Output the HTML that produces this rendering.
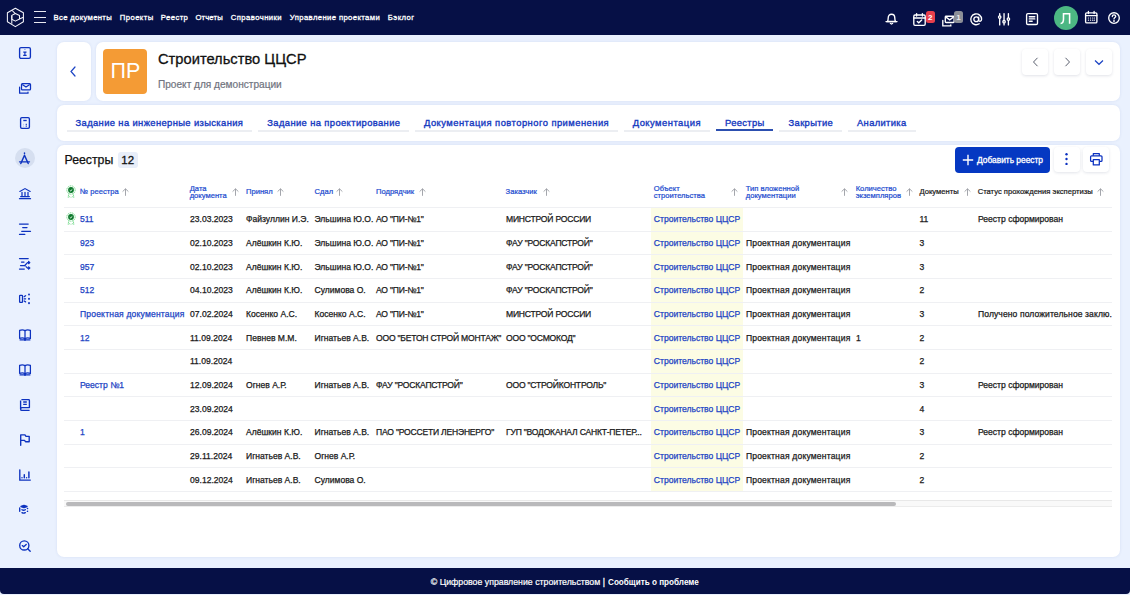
<!DOCTYPE html><html><head><meta charset="utf-8"><style>
*{margin:0;padding:0;box-sizing:border-box}
html,body{width:1130px;height:595px;overflow:hidden;background:#eaf1fe;font-family:"Liberation Sans",sans-serif}
.t{position:absolute;white-space:nowrap;line-height:1.15}
.a{position:absolute}
.card{position:absolute;background:#fff;border-radius:7px;box-shadow:0 0 3px rgba(40,70,150,.10)}
svg{position:absolute;overflow:visible}
</style></head><body><div class="a" style="left:0;top:0;width:1130px;height:34.6px;background:#061046"></div>
<svg style="left:0px;top:0px" width="30" height="34" viewBox="0 0 30 34" fill="none" stroke="#f4f4fa" stroke-width="1.05" stroke-linejoin="round">
<path d="M15.35 8.3 L23.4 12.75 L23.4 21.8 L15.35 26.6 L7.4 21.8 L7.4 12.75 Z"/>
<path d="M15.35 13.5 L19.5 15.5 L19.5 19.0 L15.35 21.1 L11.8 19.3 L11.8 15.4 Z"/>
<path d="M11.8 15.4 V23.8 M12.2 10.5 L15.0 13.4 M19.5 18.9 L23.4 17.2"/>
</svg>
<div class="a" style="left:34px;top:11px;width:12.4px;height:1.1px;background:#e8e8f0"></div>
<div class="a" style="left:34px;top:16.7px;width:12.4px;height:1.1px;background:#e8e8f0"></div>
<div class="a" style="left:34px;top:22.3px;width:12.4px;height:1.1px;background:#e8e8f0"></div>
<div class="t" style="left:53.6px;top:13.63px;font-size:7.7px;font-weight:400;color:#fff;-webkit-text-stroke:0.3px #fff;letter-spacing:0.323px">Все документы</div>
<div class="t" style="left:119.8px;top:13.63px;font-size:7.7px;font-weight:400;color:#fff;-webkit-text-stroke:0.3px #fff;letter-spacing:0.420px">Проекты</div>
<div class="t" style="left:160.8px;top:13.63px;font-size:7.7px;font-weight:400;color:#fff;-webkit-text-stroke:0.3px #fff;letter-spacing:0.420px">Реестр</div>
<div class="t" style="left:195.4px;top:13.63px;font-size:7.7px;font-weight:400;color:#fff;-webkit-text-stroke:0.3px #fff;letter-spacing:0.153px">Отчеты</div>
<div class="t" style="left:230.8px;top:13.63px;font-size:7.7px;font-weight:400;color:#fff;-webkit-text-stroke:0.3px #fff;letter-spacing:0.429px">Справочники</div>
<div class="t" style="left:289.8px;top:13.63px;font-size:7.7px;font-weight:400;color:#fff;-webkit-text-stroke:0.3px #fff;letter-spacing:0.384px">Управление проектами</div>
<div class="t" style="left:387.8px;top:13.63px;font-size:7.7px;font-weight:400;color:#fff;-webkit-text-stroke:0.3px #fff;letter-spacing:0.437px">Бэклог</div>
<svg style="left:885px;top:12px" width="13" height="13" viewBox="0 0 13 13" fill="none" stroke="#fff" stroke-width="1.35" stroke-linecap="round">
<path d="M2.5 9.5 C3 8.5 3.2 7.5 3.2 6 C3.2 3.7 4.6 2.2 6.5 2.2 C8.4 2.2 9.8 3.7 9.8 6 C9.8 7.5 10 8.5 10.5 9.5 Z"/><path d="M1 9.6 H12"/><path d="M5.4 11.4 Q6.5 12.6 7.6 11.4"/></svg>
<svg style="left:913px;top:13px" width="13" height="13" viewBox="0 0 13 13" fill="none" stroke="#fff" stroke-width="1.35" stroke-linecap="round">
<rect x="0.8" y="2" width="11.4" height="10.3" rx="1.2"/><path d="M0.8 5 H12.2 M3.6 0.6 V3 M9.4 0.6 V3"/><path d="M4.3 8.4 L5.8 9.8 L8.7 7"/></svg>
<div class="a" style="left:926px;top:11px;width:9px;height:11.5px;border-radius:2.5px;background:#e8404d"></div>
<div class="t" style="left:927.9px;top:13.06px;font-size:8px;font-weight:700;color:#fff;">2</div>
<svg style="left:942px;top:15px" width="13" height="12" viewBox="0 0 13 12" fill="none" stroke="#fff" stroke-width="1.35" stroke-linecap="round">
<rect x="3.3" y="1.2" width="8.8" height="6.3" rx="0.8"/><path d="M4.3 2.4 L7.7 4.8 L11.1 2.4"/><path d="M0.8 5.5 V10.8 H8.8 V9.8"/></svg>
<div class="a" style="left:954px;top:11px;width:9px;height:11.5px;border-radius:2.5px;background:#8c8f98"></div>
<div class="t" style="left:956.3px;top:13.06px;font-size:8px;font-weight:700;color:#e8e8ea;">1</div>
<svg style="left:970px;top:13px" width="12.5" height="12.5" viewBox="0 0 12.5 12.5" fill="none" stroke="#fff" stroke-width="1.35" stroke-linecap="round">
<circle cx="6.25" cy="6.25" r="2.4"/><path d="M8.65 4.2 V7.2 C8.65 8.6 11.6 8.8 11.6 6.25 A5.4 5.4 0 1 0 9.2 10.8"/></svg>
<svg style="left:997.5px;top:13px" width="12.5" height="12.5" viewBox="0 0 12.5 12.5" fill="none" stroke="#fff" stroke-width="1.35" stroke-linecap="round">
<path d="M1.7 0.6 V2.9 M1.7 5.3 V11.9 M6.05 0.6 V7.5 M6.05 9.9 V11.9 M10.4 0.6 V4.9 M10.4 7.3 V11.9"/><circle cx="1.7" cy="4.1" r="1.2" fill="#061046"/><circle cx="6.05" cy="8.7" r="1.2" fill="#061046"/><circle cx="10.4" cy="6.1" r="1.2" fill="#061046"/></svg>
<svg style="left:1026px;top:13px" width="12.5" height="12.5" viewBox="0 0 12.5 12.5" fill="none" stroke="#fff" stroke-width="1.35" stroke-linecap="round">
<rect x="0.6" y="0.6" width="10.9" height="10.9" rx="1.3"/><path d="M3.3 3.7 H8.8 M3.3 5.9 H8.8 M3.3 8.2 H6.2"/></svg>
<div class="a" style="left:1054.2px;top:6.2px;width:24px;height:24px;border-radius:50%;background:#4cb783"></div>
<svg style="left:1060px;top:11px" width="12" height="14" viewBox="0 0 12 14" fill="none" stroke="#fff" stroke-width="1.55"><path d="M0.6 12.4 C2.6 12.4 3.5 11.2 3.5 8 V2.8 H9.6 V12.7"/></svg>
<svg style="left:1085px;top:11px" width="12.5" height="12.5" viewBox="0 0 12.5 12.5" fill="none" stroke="#fff" stroke-width="1.35" stroke-linecap="round">
<rect x="0.6" y="1.8" width="11.3" height="10.1" rx="1.2"/><path d="M0.6 4.6 H11.9 M3.4 0.5 V2.6 M9.1 0.5 V2.6"/><path d="M3.4 7 H3.5 M5.5 7 H5.6 M7.6 7 H7.7 M9.3 7 H9.4 M3.4 9.2 H3.5 M5.5 9.2 H5.6 M7.6 9.2 H7.7 M9.3 9.2 H9.4" stroke-width="1.2"/></svg>
<svg style="left:1107.5px;top:11.5px" width="12" height="12" viewBox="0 0 12 12" fill="none" stroke="#fff" stroke-width="1.35" stroke-linecap="round">
<circle cx="6" cy="6" r="5.3"/><path d="M4.3 4.6 C4.3 3.5 5.1 2.9 6 2.9 C7 2.9 7.7 3.5 7.7 4.4 C7.7 5.5 6 5.6 6 6.9"/><circle cx="6" cy="8.9" r="0.3" fill="#fff"/></svg>
<svg style="left:19px;top:47px" width="12" height="12" viewBox="0 0 12 12" fill="none" stroke="#0d32bf" stroke-width="1.35"><rect x="0.6" y="0.6" width="10.8" height="10.8" rx="1.4"/><path d="M5.9 2.2 V2.8 M4.3 5.1 H7.5 M5.9 5.1 V8.3 M4.2 8.4 H7.6" stroke-width="1.15"/></svg>
<svg style="left:19px;top:82.5px" width="12" height="11" viewBox="0 0 12 11" fill="none" stroke="#0d32bf" stroke-width="1.25" stroke-linejoin="round" stroke-linecap="round"><rect x="2.5" y="0.7" width="9" height="6.1" rx="0.9"/><path d="M3.6 1.8 L7 4 L10.4 1.8"/><path d="M0.6 4.2 V10.2 H9 V9.2"/></svg>
<svg style="left:20px;top:117px" width="10" height="12" viewBox="0 0 10 12" fill="none" stroke="#0d32bf" stroke-width="1.35"><rect x="0.6" y="0.6" width="8.8" height="10.8" rx="1.3"/><path d="M3.3 3.5 H6.7"/><path d="M3.2 7.3 H3.4 M3.2 9.2 H3.4 M5.7 7.3 H6.8 M5.7 9.2 H6.8" stroke-width="1.25"/></svg>
<div class="a" style="left:14.9px;top:147.7px;width:20.6px;height:20.6px;border-radius:50%;background:#d6dff0"></div>
<svg style="left:19px;top:152px" width="11" height="13" viewBox="0 0 11 13" fill="none" stroke="#0d32bf" stroke-width="1.45" stroke-linecap="round"><path d="M5.5 1 V1.4"/><path d="M5.5 3.2 L1.8 11.5 M5.5 3.2 L9.2 11.5"/><path d="M0.5 9.8 H10.5" stroke-width="1.25"/></svg>
<svg style="left:19px;top:187.5px" width="12" height="12" viewBox="0 0 12 12" fill="none" stroke="#0d32bf" stroke-width="1.1" stroke-linecap="round"><path d="M0.8 3.5 L6 0.6 L11.2 3.5"/><path d="M3 4.3 V7.8 M6 4.3 V7.8 M9 4.3 V7.8" stroke-width="1.25"/><path d="M1.6 8.6 H10.4"/><path d="M0.5 10.7 H11.5" stroke-width="1.3"/></svg>
<svg style="left:19px;top:222.5px" width="12" height="12" viewBox="0 0 12 12" fill="none" stroke="#0d32bf" stroke-width="1.25" stroke-linecap="round"><path d="M0.5 1.1 H9.2 M3.7 4.6 H8 M2.7 8.3 H11.5 M0.5 11.4 H5.8"/></svg>
<svg style="left:19px;top:257px" width="12" height="13" viewBox="0 0 12 13" fill="none" stroke="#0d32bf" stroke-width="1.25" stroke-linecap="round" stroke-linejoin="round"><path d="M0.5 1.5 H9.2 M2.5 5 H5 M1.5 8.5 H5.8 M0.5 12 H5.3"/><path d="M5.8 8.5 L8.5 5.6 H10.8 M9.6 4.5 L10.8 5.6 L9.6 6.7 M7 9.6 L8.5 11 H10.8 M9.6 9.9 L10.8 11 L9.6 12.1"/></svg>
<svg style="left:19px;top:293px" width="12" height="11" viewBox="0 0 12 11" fill="none" stroke="#0d32bf" stroke-width="1.25" stroke-linecap="round"><rect x="0.6" y="2.3" width="2.9" height="7" rx="0.6"/><path d="M5.2 3.6 L6.6 2.7 M5.2 5.8 H6.6 M5.2 8 L6.6 8.9"/><path d="M10 1.3 V1.6 M10 5.6 V5.9 M10 9.9 V10.2" stroke-width="1.85"/></svg>
<svg style="left:19px;top:328.8px" width="12" height="12" viewBox="0 0 12 12" fill="none" stroke="#0d32bf" stroke-width="1.25" stroke-linejoin="round"><path d="M0.6 1.4 C2.5 0.7 4.5 0.8 6 1.6 C7.5 0.8 9.5 0.7 11.4 1.4 V9.4 C9.5 8.7 7.5 8.8 6 9.6 C4.5 8.8 2.5 8.7 0.6 9.4 Z"/><path d="M6 1.6 V10.5 M0.6 10.8 H5 L6 11.4 L7 10.8 H11.4"/></svg>
<svg style="left:19px;top:364px" width="12" height="12" viewBox="0 0 12 12" fill="none" stroke="#0d32bf" stroke-width="1.25" stroke-linejoin="round"><path d="M0.6 1.4 C2.5 0.7 4.5 0.8 6 1.6 C7.5 0.8 9.5 0.7 11.4 1.4 V9.4 C9.5 8.7 7.5 8.8 6 9.6 C4.5 8.8 2.5 8.7 0.6 9.4 Z"/><path d="M6 1.6 V10.5 M0.6 10.8 H5 L6 11.4 L7 10.8 H11.4"/></svg>
<svg style="left:20px;top:399px" width="10" height="12" viewBox="0 0 10 12" fill="none" stroke="#0d32bf" stroke-width="1.35" stroke-linejoin="round"><path d="M1.4 0.6 H8.6 C9 0.6 9.4 1 9.4 1.4 V8.6 H1.6 C1 8.6 0.6 9.2 0.6 9.9 C0.6 10.7 1 11.4 1.8 11.4 H9.6"/><path d="M0.6 1.4 V10 M3.2 3 H6.8 M3.2 5.4 H6.8" /></svg>
<svg style="left:20px;top:434px" width="10" height="12" viewBox="0 0 10 12" fill="none" stroke="#0d32bf" stroke-width="1.35" stroke-linecap="round" stroke-linejoin="round"><path d="M0.7 11.3 V0.8 H5 L6 2.3 H9.2 V7.7 H5.5 L4.5 6.3 H0.7"/></svg>
<svg style="left:19px;top:469px" width="12" height="12" viewBox="0 0 12 12" fill="none" stroke="#0d32bf" stroke-width="1.35" stroke-linecap="round"><path d="M0.8 0.8 V11.1 H11.3"/><path d="M3 8.6 V8.8 M5.3 5.8 V8.8 M7.6 8.6 V8.8 M9.9 3 V8.8" stroke-width="1.45"/></svg>
<svg style="left:19px;top:504px" width="11" height="11" viewBox="0 0 11 11" fill="none" stroke="#0d32bf" stroke-width="1.35" stroke-linecap="round" stroke-linejoin="round"><path d="M2 2.5 L5 1.5 L8 2.5 L5 3.5 Z" fill="#0d32bf"/><path d="M0.7 4 V7.2 M3 5.7 Q4.6 6.8 6.3 5.7 M3 8.6 Q4.6 9.7 6.3 8.6 M8.4 4.6 L8.6 4.4 M8.4 7.4 L8.6 7.2"/></svg>
<svg style="left:19px;top:539.5px" width="12" height="12" viewBox="0 0 12 12" fill="none" stroke="#0d32bf" stroke-width="1.35" stroke-linecap="round" stroke-linejoin="round"><circle cx="5.3" cy="5.4" r="4.6"/><path d="M8.7 8.8 L11.2 11.3"/><path d="M3.3 5.6 L4.7 6.8 L7.2 4.5"/></svg>
<div class="card" style="left:57px;top:42px;width:33.5px;height:58.8px"></div>
<svg style="left:69px;top:66px" width="8" height="11" viewBox="0 0 8 11" fill="none" stroke="#1c44c4" stroke-width="1.2" stroke-linecap="round"><path d="M6 1 L2 5.5 L6 10"/></svg>
<div class="card" style="left:96px;top:42px;width:1023.8px;height:58.8px"></div>
<div class="a" style="left:103px;top:49px;width:44px;height:44.5px;border-radius:4px;background:#f49b35"></div>
<div class="t" style="left:110.5px;top:58.84px;font-size:21.5px;font-weight:400;color:#fff;">ПР</div>
<div class="t" style="left:158px;top:50.60px;font-size:14.7px;font-weight:400;color:#111;-webkit-text-stroke:0.3px #111">Строительство ЦЦСР</div>
<div class="t" style="left:158px;top:78.96px;font-size:10.1px;font-weight:400;color:#70737e;-webkit-text-stroke:0.2px #70737e">Проект для демонстрации</div>
<div class="a" style="left:1022.2px;top:49.4px;width:26px;height:25.2px;border-radius:4px;background:#fff;box-shadow:0 1px 3px rgba(20,30,80,.13)"></div>
<div class="a" style="left:1054px;top:49.4px;width:26px;height:25.2px;border-radius:4px;background:#fff;box-shadow:0 1px 3px rgba(20,30,80,.13)"></div>
<div class="a" style="left:1086.1px;top:49.4px;width:26px;height:25.2px;border-radius:4px;background:#fff;box-shadow:0 1px 3px rgba(20,30,80,.13)"></div>
<svg style="left:1031.5px;top:57px" width="7" height="10" viewBox="0 0 7 10" fill="none" stroke="#5a5f6e" stroke-width="1"><path d="M5.5 0.8 L1.5 5 L5.5 9.2"/></svg>
<svg style="left:1063.5px;top:57px" width="7" height="10" viewBox="0 0 7 10" fill="none" stroke="#5a5f6e" stroke-width="1"><path d="M1.5 0.8 L5.5 5 L1.5 9.2"/></svg>
<svg style="left:1094px;top:59px" width="10" height="7" viewBox="0 0 10 7" fill="none" stroke="#1c44c4" stroke-width="1.2"><path d="M1 1.5 L5 5.3 L9 1.5"/></svg>
<div class="card" style="left:57px;top:105px;width:1062.8px;height:36px"></div>
<div class="a" style="left:66.6px;top:129.5px;width:185.9px;height:2px;background:#eceef2"></div>
<div class="t" style="left:75.5px;top:117.59px;font-size:9.4px;font-weight:400;color:#1539c0;-webkit-text-stroke:0.35px #1539c0;letter-spacing:0.380px">Задание на инженерные изыскания</div>
<div class="a" style="left:258px;top:129.5px;width:151.3px;height:2px;background:#eceef2"></div>
<div class="t" style="left:267.3px;top:117.59px;font-size:9.4px;font-weight:400;color:#1539c0;-webkit-text-stroke:0.35px #1539c0;letter-spacing:0.388px">Задание на проектирование</div>
<div class="a" style="left:415.3px;top:129.5px;width:202.8px;height:2px;background:#eceef2"></div>
<div class="t" style="left:424px;top:117.59px;font-size:9.4px;font-weight:400;color:#1539c0;-webkit-text-stroke:0.35px #1539c0;letter-spacing:0.471px">Документация повторного применения</div>
<div class="a" style="left:624px;top:129.5px;width:86px;height:2px;background:#eceef2"></div>
<div class="t" style="left:632.7px;top:117.59px;font-size:9.4px;font-weight:400;color:#1539c0;-webkit-text-stroke:0.35px #1539c0;letter-spacing:0.492px">Документация</div>
<div class="a" style="left:716px;top:129.3px;width:57px;height:2.2px;background:#2c4fb0"></div>
<div class="t" style="left:725px;top:117.59px;font-size:9.4px;font-weight:400;color:#1539c0;-webkit-text-stroke:0.35px #1539c0;letter-spacing:0.343px">Реестры</div>
<div class="a" style="left:778.8px;top:129.5px;width:63.700000000000045px;height:2px;background:#eceef2"></div>
<div class="t" style="left:788.5px;top:117.59px;font-size:9.4px;font-weight:400;color:#1539c0;-webkit-text-stroke:0.35px #1539c0;letter-spacing:0.376px">Закрытие</div>
<div class="a" style="left:848px;top:129.5px;width:68px;height:2px;background:#eceef2"></div>
<div class="t" style="left:857px;top:117.59px;font-size:9.4px;font-weight:400;color:#1539c0;-webkit-text-stroke:0.35px #1539c0;letter-spacing:0.354px">Аналитика</div>
<div class="card" style="left:57px;top:145.3px;width:1062.8px;height:412px"></div>
<div class="t" style="left:64.5px;top:153.17px;font-size:12.3px;font-weight:400;color:#111;-webkit-text-stroke:0.25px #111">Реестры</div>
<div class="a" style="left:118.2px;top:151.5px;width:19.6px;height:16.2px;border-radius:3px;background:#e8eef9"></div>
<div class="t" style="left:121.3px;top:153.89px;font-size:11.5px;font-weight:400;color:#111;-webkit-text-stroke:0.3px #111">12</div>
<div class="a" style="left:955px;top:147.2px;width:95px;height:25.4px;border-radius:4px;background:#0538c2"></div>
<svg style="left:962px;top:153.5px" width="12" height="12" viewBox="0 0 12 12" stroke="#fff" stroke-width="1.4"><path d="M6 0.8 V11.2 M0.8 6 H11.2"/></svg>
<div class="t" style="left:977px;top:155.90px;font-size:8.4px;font-weight:400;color:#fff;-webkit-text-stroke:0.3px #fff">Добавить реестр</div>
<div class="a" style="left:1054px;top:146.5px;width:25.8px;height:25.5px;border-radius:4px;background:#fff;box-shadow:0 1px 3px rgba(20,30,80,.12)"></div>
<div class="a" style="left:1083.2px;top:146.5px;width:25.8px;height:25.5px;border-radius:4px;background:#fff;box-shadow:0 1px 3px rgba(20,30,80,.12)"></div>
<svg style="left:1064px;top:152px" width="5" height="14" viewBox="0 0 5 14" fill="#0a30c0"><circle cx="2.5" cy="2.2" r="1.2"/><circle cx="2.5" cy="7" r="1.2"/><circle cx="2.5" cy="11.9" r="1.2"/></svg>
<svg style="left:1090px;top:153px" width="13" height="13" viewBox="0 0 13 13" fill="none" stroke="#0a30c0" stroke-width="1.25" stroke-linejoin="round"><path d="M3.3 2.8 V0.7 H9.3 V2.8"/><path d="M3 8.4 H1.5 C0.9 8.4 0.6 8.1 0.6 7.5 V3.8 C0.6 3.2 1 2.8 1.6 2.8 H11 C11.6 2.8 12 3.2 12 3.8 V7.5 C12 8.1 11.7 8.4 11.1 8.4 H9.6"/><rect x="3.3" y="6.5" width="6" height="5.4"/></svg>
<div class="a" style="left:651.3px;top:207.5px;width:91.6px;height:283.9px;background:#fcfce4"></div>
<div class="a" style="left:64px;top:207.0px;width:1048px;height:1px;background:#eff0f3"></div>
<div class="a" style="left:64px;top:230.66px;width:1048px;height:1px;background:#eff0f3"></div>
<div class="a" style="left:64px;top:254.32px;width:1048px;height:1px;background:#eff0f3"></div>
<div class="a" style="left:64px;top:277.98px;width:1048px;height:1px;background:#eff0f3"></div>
<div class="a" style="left:64px;top:301.64px;width:1048px;height:1px;background:#eff0f3"></div>
<div class="a" style="left:64px;top:325.30px;width:1048px;height:1px;background:#eff0f3"></div>
<div class="a" style="left:64px;top:348.96px;width:1048px;height:1px;background:#eff0f3"></div>
<div class="a" style="left:64px;top:372.62px;width:1048px;height:1px;background:#eff0f3"></div>
<div class="a" style="left:64px;top:396.28px;width:1048px;height:1px;background:#eff0f3"></div>
<div class="a" style="left:64px;top:419.94px;width:1048px;height:1px;background:#eff0f3"></div>
<div class="a" style="left:64px;top:443.60px;width:1048px;height:1px;background:#eff0f3"></div>
<div class="a" style="left:64px;top:467.26px;width:1048px;height:1px;background:#eff0f3"></div>
<div class="a" style="left:64px;top:490.92px;width:1048px;height:1px;background:#eff0f3"></div>
<svg style="left:65.8px;top:184.8px" width="10" height="13" viewBox="0 0 10 13"><path d="M3 8.4 L2 12.3 L3.8 11.6 L4.6 12.8 M7 8.4 L8 12.3 L6.2 11.6 L5.4 12.8" fill="none" stroke="#6fd987" stroke-width="1" stroke-dasharray="1.2 0.6"/><circle cx="5" cy="5" r="4.2" fill="none" stroke="#77da8c" stroke-width="1" stroke-dasharray="1.3 0.7"/><circle cx="5" cy="5" r="2.9" fill="#0c7a2c"/><path d="M3.8 5.2 L4.7 5.9 L6.3 4.4" fill="none" stroke="#fff" stroke-width="0.9"/></svg>
<div class="t" style="left:80px;top:187.92px;font-size:7.6px;font-weight:400;color:#1d4ccf;-webkit-text-stroke:0.22px #1d4ccf">№ реестра</div>
<svg style="left:122px;top:188px" width="7" height="8" viewBox="0 0 7 8" fill="none" stroke="#9a9ca3" stroke-width="0.9"><path d="M3.5 7.8 V0.8 M0.6 3.6 L3.5 0.8 L6.4 3.6"/></svg>
<div class="t" style="left:189.7px;top:184.5px;font-size:7.6px;font-weight:400;color:#1d4ccf;line-height:7.1px;-webkit-text-stroke:0.22px #1d4ccf">Дата<br>документа</div>
<svg style="left:231.8px;top:188px" width="7" height="8" viewBox="0 0 7 8" fill="none" stroke="#9a9ca3" stroke-width="0.9"><path d="M3.5 7.8 V0.8 M0.6 3.6 L3.5 0.8 L6.4 3.6"/></svg>
<div class="t" style="left:246px;top:187.92px;font-size:7.6px;font-weight:400;color:#1d4ccf;-webkit-text-stroke:0.22px #1d4ccf">Принял</div>
<svg style="left:276.6px;top:188px" width="7" height="8" viewBox="0 0 7 8" fill="none" stroke="#9a9ca3" stroke-width="0.9"><path d="M3.5 7.8 V0.8 M0.6 3.6 L3.5 0.8 L6.4 3.6"/></svg>
<div class="t" style="left:314.6px;top:187.92px;font-size:7.6px;font-weight:400;color:#1d4ccf;-webkit-text-stroke:0.22px #1d4ccf">Сдал</div>
<svg style="left:336px;top:188px" width="7" height="8" viewBox="0 0 7 8" fill="none" stroke="#9a9ca3" stroke-width="0.9"><path d="M3.5 7.8 V0.8 M0.6 3.6 L3.5 0.8 L6.4 3.6"/></svg>
<div class="t" style="left:376px;top:187.92px;font-size:7.6px;font-weight:400;color:#1d4ccf;-webkit-text-stroke:0.22px #1d4ccf">Подрядчик</div>
<svg style="left:418.6px;top:188px" width="7" height="8" viewBox="0 0 7 8" fill="none" stroke="#9a9ca3" stroke-width="0.9"><path d="M3.5 7.8 V0.8 M0.6 3.6 L3.5 0.8 L6.4 3.6"/></svg>
<div class="t" style="left:505.6px;top:187.92px;font-size:7.6px;font-weight:400;color:#1d4ccf;-webkit-text-stroke:0.22px #1d4ccf">Заказчик</div>
<svg style="left:543px;top:188px" width="7" height="8" viewBox="0 0 7 8" fill="none" stroke="#9a9ca3" stroke-width="0.9"><path d="M3.5 7.8 V0.8 M0.6 3.6 L3.5 0.8 L6.4 3.6"/></svg>
<div class="t" style="left:653.8px;top:184.5px;font-size:7.6px;font-weight:400;color:#1d4ccf;line-height:7.1px;-webkit-text-stroke:0.22px #1d4ccf">Объект<br>строительства</div>
<svg style="left:730.5px;top:188px" width="7" height="8" viewBox="0 0 7 8" fill="none" stroke="#9a9ca3" stroke-width="0.9"><path d="M3.5 7.8 V0.8 M0.6 3.6 L3.5 0.8 L6.4 3.6"/></svg>
<div class="t" style="left:745.8px;top:184.5px;font-size:7.6px;font-weight:400;color:#1d4ccf;line-height:7.1px;-webkit-text-stroke:0.22px #1d4ccf">Тип вложенной<br>документации</div>
<svg style="left:841px;top:188px" width="7" height="8" viewBox="0 0 7 8" fill="none" stroke="#9a9ca3" stroke-width="0.9"><path d="M3.5 7.8 V0.8 M0.6 3.6 L3.5 0.8 L6.4 3.6"/></svg>
<div class="t" style="left:855.7px;top:184.5px;font-size:7.6px;font-weight:400;color:#1d4ccf;line-height:7.1px;-webkit-text-stroke:0.22px #1d4ccf">Количество<br>экземпляров</div>
<svg style="left:906px;top:188px" width="7" height="8" viewBox="0 0 7 8" fill="none" stroke="#9a9ca3" stroke-width="0.9"><path d="M3.5 7.8 V0.8 M0.6 3.6 L3.5 0.8 L6.4 3.6"/></svg>
<div class="t" style="left:919.5px;top:187.92px;font-size:7.6px;font-weight:400;color:#1a1a1a;-webkit-text-stroke:0.22px #1a1a1a">Документы</div>
<svg style="left:963.6px;top:188px" width="7" height="8" viewBox="0 0 7 8" fill="none" stroke="#9a9ca3" stroke-width="0.9"><path d="M3.5 7.8 V0.8 M0.6 3.6 L3.5 0.8 L6.4 3.6"/></svg>
<div class="t" style="left:977.7px;top:187.92px;font-size:7.6px;font-weight:400;color:#1a1a1a;-webkit-text-stroke:0.22px #1a1a1a">Статус прохождения экспертизы</div>
<svg style="left:1097px;top:188px" width="7" height="8" viewBox="0 0 7 8" fill="none" stroke="#9a9ca3" stroke-width="0.9"><path d="M3.5 7.8 V0.8 M0.6 3.6 L3.5 0.8 L6.4 3.6"/></svg>
<svg style="left:65.8px;top:211.7px" width="10" height="13" viewBox="0 0 10 13"><path d="M3 8.4 L2 12.3 L3.8 11.6 L4.6 12.8 M7 8.4 L8 12.3 L6.2 11.6 L5.4 12.8" fill="none" stroke="#6fd987" stroke-width="1" stroke-dasharray="1.2 0.6"/><circle cx="5" cy="5" r="4.2" fill="none" stroke="#77da8c" stroke-width="1" stroke-dasharray="1.3 0.7"/><circle cx="5" cy="5" r="2.9" fill="#0c7a2c"/><path d="M3.8 5.2 L4.7 5.9 L6.3 4.4" fill="none" stroke="#fff" stroke-width="0.9"/></svg>
<div class="t" style="left:80px;top:215.26px;font-size:8.55px;font-weight:400;color:#1c44c4;-webkit-text-stroke:0.25px #1c44c4;letter-spacing:0px">511</div>
<div class="t" style="left:190px;top:215.26px;font-size:8.55px;font-weight:400;color:#1a1a1a;-webkit-text-stroke:0.25px #1a1a1a;letter-spacing:0px">23.03.2023</div>
<div class="t" style="left:246px;top:215.26px;font-size:8.55px;font-weight:400;color:#1a1a1a;-webkit-text-stroke:0.25px #1a1a1a;letter-spacing:0px">Файзуллин И.Э.</div>
<div class="t" style="left:314.5px;top:215.26px;font-size:8.55px;font-weight:400;color:#1a1a1a;-webkit-text-stroke:0.25px #1a1a1a;letter-spacing:0px">Эльшина Ю.О.</div>
<div class="t" style="left:376px;top:215.26px;font-size:8.55px;font-weight:400;color:#1a1a1a;-webkit-text-stroke:0.25px #1a1a1a;letter-spacing:-0.2px">АО &quot;ПИ-№1&quot;</div>
<div class="t" style="left:506px;top:215.26px;font-size:8.55px;font-weight:400;color:#1a1a1a;-webkit-text-stroke:0.25px #1a1a1a;letter-spacing:-0.2px">МИНСТРОЙ РОССИИ</div>
<div class="t" style="left:653.8px;top:215.26px;font-size:8.55px;font-weight:400;color:#1c44c4;-webkit-text-stroke:0.25px #1c44c4;letter-spacing:0px">Строительство ЦЦСР</div>
<div class="t" style="left:919.5px;top:215.26px;font-size:8.55px;font-weight:400;color:#1a1a1a;-webkit-text-stroke:0.25px #1a1a1a;letter-spacing:0px">11</div>
<div class="t" style="left:978px;top:215.26px;font-size:8.55px;font-weight:400;color:#1a1a1a;-webkit-text-stroke:0.25px #1a1a1a;letter-spacing:0px">Реестр сформирован</div>
<div class="t" style="left:80px;top:238.92px;font-size:8.55px;font-weight:400;color:#1c44c4;-webkit-text-stroke:0.25px #1c44c4;letter-spacing:0px">923</div>
<div class="t" style="left:190px;top:238.92px;font-size:8.55px;font-weight:400;color:#1a1a1a;-webkit-text-stroke:0.25px #1a1a1a;letter-spacing:0px">02.10.2023</div>
<div class="t" style="left:246px;top:238.92px;font-size:8.55px;font-weight:400;color:#1a1a1a;-webkit-text-stroke:0.25px #1a1a1a;letter-spacing:0px">Алёшкин К.Ю.</div>
<div class="t" style="left:314.5px;top:238.92px;font-size:8.55px;font-weight:400;color:#1a1a1a;-webkit-text-stroke:0.25px #1a1a1a;letter-spacing:0px">Эльшина Ю.О.</div>
<div class="t" style="left:376px;top:238.92px;font-size:8.55px;font-weight:400;color:#1a1a1a;-webkit-text-stroke:0.25px #1a1a1a;letter-spacing:-0.2px">АО &quot;ПИ-№1&quot;</div>
<div class="t" style="left:506px;top:238.92px;font-size:8.55px;font-weight:400;color:#1a1a1a;-webkit-text-stroke:0.25px #1a1a1a;letter-spacing:-0.2px">ФАУ &quot;РОСКАПСТРОЙ&quot;</div>
<div class="t" style="left:653.8px;top:238.92px;font-size:8.55px;font-weight:400;color:#1c44c4;-webkit-text-stroke:0.25px #1c44c4;letter-spacing:0px">Строительство ЦЦСР</div>
<div class="t" style="left:745.9px;top:238.92px;font-size:8.55px;font-weight:400;color:#1a1a1a;-webkit-text-stroke:0.25px #1a1a1a;letter-spacing:0.18px">Проектная документация</div>
<div class="t" style="left:919.5px;top:238.92px;font-size:8.55px;font-weight:400;color:#1a1a1a;-webkit-text-stroke:0.25px #1a1a1a;letter-spacing:0px">3</div>
<div class="t" style="left:80px;top:262.58px;font-size:8.55px;font-weight:400;color:#1c44c4;-webkit-text-stroke:0.25px #1c44c4;letter-spacing:0px">957</div>
<div class="t" style="left:190px;top:262.58px;font-size:8.55px;font-weight:400;color:#1a1a1a;-webkit-text-stroke:0.25px #1a1a1a;letter-spacing:0px">02.10.2023</div>
<div class="t" style="left:246px;top:262.58px;font-size:8.55px;font-weight:400;color:#1a1a1a;-webkit-text-stroke:0.25px #1a1a1a;letter-spacing:0px">Алёшкин К.Ю.</div>
<div class="t" style="left:314.5px;top:262.58px;font-size:8.55px;font-weight:400;color:#1a1a1a;-webkit-text-stroke:0.25px #1a1a1a;letter-spacing:0px">Эльшина Ю.О.</div>
<div class="t" style="left:376px;top:262.58px;font-size:8.55px;font-weight:400;color:#1a1a1a;-webkit-text-stroke:0.25px #1a1a1a;letter-spacing:-0.2px">АО &quot;ПИ-№1&quot;</div>
<div class="t" style="left:506px;top:262.58px;font-size:8.55px;font-weight:400;color:#1a1a1a;-webkit-text-stroke:0.25px #1a1a1a;letter-spacing:-0.2px">ФАУ &quot;РОСКАПСТРОЙ&quot;</div>
<div class="t" style="left:653.8px;top:262.58px;font-size:8.55px;font-weight:400;color:#1c44c4;-webkit-text-stroke:0.25px #1c44c4;letter-spacing:0px">Строительство ЦЦСР</div>
<div class="t" style="left:745.9px;top:262.58px;font-size:8.55px;font-weight:400;color:#1a1a1a;-webkit-text-stroke:0.25px #1a1a1a;letter-spacing:0.18px">Проектная документация</div>
<div class="t" style="left:919.5px;top:262.58px;font-size:8.55px;font-weight:400;color:#1a1a1a;-webkit-text-stroke:0.25px #1a1a1a;letter-spacing:0px">3</div>
<div class="t" style="left:80px;top:286.24px;font-size:8.55px;font-weight:400;color:#1c44c4;-webkit-text-stroke:0.25px #1c44c4;letter-spacing:0px">512</div>
<div class="t" style="left:190px;top:286.24px;font-size:8.55px;font-weight:400;color:#1a1a1a;-webkit-text-stroke:0.25px #1a1a1a;letter-spacing:0px">04.10.2023</div>
<div class="t" style="left:246px;top:286.24px;font-size:8.55px;font-weight:400;color:#1a1a1a;-webkit-text-stroke:0.25px #1a1a1a;letter-spacing:0px">Алёшкин К.Ю.</div>
<div class="t" style="left:314.5px;top:286.24px;font-size:8.55px;font-weight:400;color:#1a1a1a;-webkit-text-stroke:0.25px #1a1a1a;letter-spacing:0px">Сулимова О.</div>
<div class="t" style="left:376px;top:286.24px;font-size:8.55px;font-weight:400;color:#1a1a1a;-webkit-text-stroke:0.25px #1a1a1a;letter-spacing:-0.2px">АО &quot;ПИ-№1&quot;</div>
<div class="t" style="left:506px;top:286.24px;font-size:8.55px;font-weight:400;color:#1a1a1a;-webkit-text-stroke:0.25px #1a1a1a;letter-spacing:-0.2px">ФАУ &quot;РОСКАПСТРОЙ&quot;</div>
<div class="t" style="left:653.8px;top:286.24px;font-size:8.55px;font-weight:400;color:#1c44c4;-webkit-text-stroke:0.25px #1c44c4;letter-spacing:0px">Строительство ЦЦСР</div>
<div class="t" style="left:745.9px;top:286.24px;font-size:8.55px;font-weight:400;color:#1a1a1a;-webkit-text-stroke:0.25px #1a1a1a;letter-spacing:0.18px">Проектная документация</div>
<div class="t" style="left:919.5px;top:286.24px;font-size:8.55px;font-weight:400;color:#1a1a1a;-webkit-text-stroke:0.25px #1a1a1a;letter-spacing:0px">2</div>
<div class="t" style="left:80px;top:309.90px;font-size:8.55px;font-weight:400;color:#1c44c4;-webkit-text-stroke:0.25px #1c44c4;letter-spacing:0.18px">Проектная документация</div>
<div class="t" style="left:190px;top:309.90px;font-size:8.55px;font-weight:400;color:#1a1a1a;-webkit-text-stroke:0.25px #1a1a1a;letter-spacing:0px">07.02.2024</div>
<div class="t" style="left:246px;top:309.90px;font-size:8.55px;font-weight:400;color:#1a1a1a;-webkit-text-stroke:0.25px #1a1a1a;letter-spacing:0px">Косенко А.С.</div>
<div class="t" style="left:314.5px;top:309.90px;font-size:8.55px;font-weight:400;color:#1a1a1a;-webkit-text-stroke:0.25px #1a1a1a;letter-spacing:0px">Косенко А.С.</div>
<div class="t" style="left:376px;top:309.90px;font-size:8.55px;font-weight:400;color:#1a1a1a;-webkit-text-stroke:0.25px #1a1a1a;letter-spacing:-0.2px">АО &quot;ПИ-№1&quot;</div>
<div class="t" style="left:506px;top:309.90px;font-size:8.55px;font-weight:400;color:#1a1a1a;-webkit-text-stroke:0.25px #1a1a1a;letter-spacing:-0.2px">МИНСТРОЙ РОССИИ</div>
<div class="t" style="left:653.8px;top:309.90px;font-size:8.55px;font-weight:400;color:#1c44c4;-webkit-text-stroke:0.25px #1c44c4;letter-spacing:0px">Строительство ЦЦСР</div>
<div class="t" style="left:745.9px;top:309.90px;font-size:8.55px;font-weight:400;color:#1a1a1a;-webkit-text-stroke:0.25px #1a1a1a;letter-spacing:0.18px">Проектная документация</div>
<div class="t" style="left:919.5px;top:309.90px;font-size:8.55px;font-weight:400;color:#1a1a1a;-webkit-text-stroke:0.25px #1a1a1a;letter-spacing:0px">3</div>
<div class="t" style="left:978px;top:309.90px;font-size:8.55px;font-weight:400;color:#1a1a1a;-webkit-text-stroke:0.25px #1a1a1a;letter-spacing:0.1px">Получено положительное заклю.</div>
<div class="t" style="left:80px;top:333.56px;font-size:8.55px;font-weight:400;color:#1c44c4;-webkit-text-stroke:0.25px #1c44c4;letter-spacing:0px">12</div>
<div class="t" style="left:190px;top:333.56px;font-size:8.55px;font-weight:400;color:#1a1a1a;-webkit-text-stroke:0.25px #1a1a1a;letter-spacing:0px">11.09.2024</div>
<div class="t" style="left:246px;top:333.56px;font-size:8.55px;font-weight:400;color:#1a1a1a;-webkit-text-stroke:0.25px #1a1a1a;letter-spacing:0px">Певнев М.М.</div>
<div class="t" style="left:314.5px;top:333.56px;font-size:8.55px;font-weight:400;color:#1a1a1a;-webkit-text-stroke:0.25px #1a1a1a;letter-spacing:0px">Игнатьев А.В.</div>
<div class="t" style="left:376px;top:333.56px;font-size:8.55px;font-weight:400;color:#1a1a1a;-webkit-text-stroke:0.25px #1a1a1a;letter-spacing:-0.2px">ООО &quot;БЕТОН СТРОЙ МОНТАЖ&quot;</div>
<div class="t" style="left:506px;top:333.56px;font-size:8.55px;font-weight:400;color:#1a1a1a;-webkit-text-stroke:0.25px #1a1a1a;letter-spacing:-0.2px">ООО &quot;ОСМОКОД&quot;</div>
<div class="t" style="left:653.8px;top:333.56px;font-size:8.55px;font-weight:400;color:#1c44c4;-webkit-text-stroke:0.25px #1c44c4;letter-spacing:0px">Строительство ЦЦСР</div>
<div class="t" style="left:745.9px;top:333.56px;font-size:8.55px;font-weight:400;color:#1a1a1a;-webkit-text-stroke:0.25px #1a1a1a;letter-spacing:0.18px">Проектная документация</div>
<div class="t" style="left:856px;top:333.56px;font-size:8.55px;font-weight:400;color:#1a1a1a;-webkit-text-stroke:0.25px #1a1a1a;letter-spacing:0px">1</div>
<div class="t" style="left:919.5px;top:333.56px;font-size:8.55px;font-weight:400;color:#1a1a1a;-webkit-text-stroke:0.25px #1a1a1a;letter-spacing:0px">2</div>
<div class="t" style="left:190px;top:357.22px;font-size:8.55px;font-weight:400;color:#1a1a1a;-webkit-text-stroke:0.25px #1a1a1a;letter-spacing:0px">11.09.2024</div>
<div class="t" style="left:653.8px;top:357.22px;font-size:8.55px;font-weight:400;color:#1c44c4;-webkit-text-stroke:0.25px #1c44c4;letter-spacing:0px">Строительство ЦЦСР</div>
<div class="t" style="left:919.5px;top:357.22px;font-size:8.55px;font-weight:400;color:#1a1a1a;-webkit-text-stroke:0.25px #1a1a1a;letter-spacing:0px">2</div>
<div class="t" style="left:80px;top:380.88px;font-size:8.55px;font-weight:400;color:#1c44c4;-webkit-text-stroke:0.25px #1c44c4;letter-spacing:0px">Реестр №1</div>
<div class="t" style="left:190px;top:380.88px;font-size:8.55px;font-weight:400;color:#1a1a1a;-webkit-text-stroke:0.25px #1a1a1a;letter-spacing:0px">12.09.2024</div>
<div class="t" style="left:246px;top:380.88px;font-size:8.55px;font-weight:400;color:#1a1a1a;-webkit-text-stroke:0.25px #1a1a1a;letter-spacing:0px">Огнев А.Р.</div>
<div class="t" style="left:314.5px;top:380.88px;font-size:8.55px;font-weight:400;color:#1a1a1a;-webkit-text-stroke:0.25px #1a1a1a;letter-spacing:0px">Игнатьев А.В.</div>
<div class="t" style="left:376px;top:380.88px;font-size:8.55px;font-weight:400;color:#1a1a1a;-webkit-text-stroke:0.25px #1a1a1a;letter-spacing:-0.2px">ФАУ &quot;РОСКАПСТРОЙ&quot;</div>
<div class="t" style="left:506px;top:380.88px;font-size:8.55px;font-weight:400;color:#1a1a1a;-webkit-text-stroke:0.25px #1a1a1a;letter-spacing:-0.2px">ООО &quot;СТРОЙКОНТРОЛЬ&quot;</div>
<div class="t" style="left:653.8px;top:380.88px;font-size:8.55px;font-weight:400;color:#1c44c4;-webkit-text-stroke:0.25px #1c44c4;letter-spacing:0px">Строительство ЦЦСР</div>
<div class="t" style="left:919.5px;top:380.88px;font-size:8.55px;font-weight:400;color:#1a1a1a;-webkit-text-stroke:0.25px #1a1a1a;letter-spacing:0px">3</div>
<div class="t" style="left:978px;top:380.88px;font-size:8.55px;font-weight:400;color:#1a1a1a;-webkit-text-stroke:0.25px #1a1a1a;letter-spacing:0px">Реестр сформирован</div>
<div class="t" style="left:190px;top:404.54px;font-size:8.55px;font-weight:400;color:#1a1a1a;-webkit-text-stroke:0.25px #1a1a1a;letter-spacing:0px">23.09.2024</div>
<div class="t" style="left:653.8px;top:404.54px;font-size:8.55px;font-weight:400;color:#1c44c4;-webkit-text-stroke:0.25px #1c44c4;letter-spacing:0px">Строительство ЦЦСР</div>
<div class="t" style="left:919.5px;top:404.54px;font-size:8.55px;font-weight:400;color:#1a1a1a;-webkit-text-stroke:0.25px #1a1a1a;letter-spacing:0px">4</div>
<div class="t" style="left:80px;top:428.20px;font-size:8.55px;font-weight:400;color:#1c44c4;-webkit-text-stroke:0.25px #1c44c4;letter-spacing:0px">1</div>
<div class="t" style="left:190px;top:428.20px;font-size:8.55px;font-weight:400;color:#1a1a1a;-webkit-text-stroke:0.25px #1a1a1a;letter-spacing:0px">26.09.2024</div>
<div class="t" style="left:246px;top:428.20px;font-size:8.55px;font-weight:400;color:#1a1a1a;-webkit-text-stroke:0.25px #1a1a1a;letter-spacing:0px">Алёшкин К.Ю.</div>
<div class="t" style="left:314.5px;top:428.20px;font-size:8.55px;font-weight:400;color:#1a1a1a;-webkit-text-stroke:0.25px #1a1a1a;letter-spacing:0px">Игнатьев А.В.</div>
<div class="t" style="left:376px;top:428.20px;font-size:8.55px;font-weight:400;color:#1a1a1a;-webkit-text-stroke:0.25px #1a1a1a;letter-spacing:-0.2px">ПАО &quot;РОССЕТИ ЛЕНЭНЕРГО&quot;</div>
<div class="t" style="left:506px;top:428.20px;font-size:8.55px;font-weight:400;color:#1a1a1a;-webkit-text-stroke:0.25px #1a1a1a;letter-spacing:-0.2px">ГУП &quot;ВОДОКАНАЛ САНКТ-ПЕТЕР...</div>
<div class="t" style="left:653.8px;top:428.20px;font-size:8.55px;font-weight:400;color:#1c44c4;-webkit-text-stroke:0.25px #1c44c4;letter-spacing:0px">Строительство ЦЦСР</div>
<div class="t" style="left:745.9px;top:428.20px;font-size:8.55px;font-weight:400;color:#1a1a1a;-webkit-text-stroke:0.25px #1a1a1a;letter-spacing:0.18px">Проектная документация</div>
<div class="t" style="left:919.5px;top:428.20px;font-size:8.55px;font-weight:400;color:#1a1a1a;-webkit-text-stroke:0.25px #1a1a1a;letter-spacing:0px">3</div>
<div class="t" style="left:978px;top:428.20px;font-size:8.55px;font-weight:400;color:#1a1a1a;-webkit-text-stroke:0.25px #1a1a1a;letter-spacing:0px">Реестр сформирован</div>
<div class="t" style="left:190px;top:451.86px;font-size:8.55px;font-weight:400;color:#1a1a1a;-webkit-text-stroke:0.25px #1a1a1a;letter-spacing:0px">29.11.2024</div>
<div class="t" style="left:246px;top:451.86px;font-size:8.55px;font-weight:400;color:#1a1a1a;-webkit-text-stroke:0.25px #1a1a1a;letter-spacing:0px">Игнатьев А.В.</div>
<div class="t" style="left:314.5px;top:451.86px;font-size:8.55px;font-weight:400;color:#1a1a1a;-webkit-text-stroke:0.25px #1a1a1a;letter-spacing:0px">Огнев А.Р.</div>
<div class="t" style="left:653.8px;top:451.86px;font-size:8.55px;font-weight:400;color:#1c44c4;-webkit-text-stroke:0.25px #1c44c4;letter-spacing:0px">Строительство ЦЦСР</div>
<div class="t" style="left:745.9px;top:451.86px;font-size:8.55px;font-weight:400;color:#1a1a1a;-webkit-text-stroke:0.25px #1a1a1a;letter-spacing:0.18px">Проектная документация</div>
<div class="t" style="left:919.5px;top:451.86px;font-size:8.55px;font-weight:400;color:#1a1a1a;-webkit-text-stroke:0.25px #1a1a1a;letter-spacing:0px">2</div>
<div class="t" style="left:190px;top:475.52px;font-size:8.55px;font-weight:400;color:#1a1a1a;-webkit-text-stroke:0.25px #1a1a1a;letter-spacing:0px">09.12.2024</div>
<div class="t" style="left:246px;top:475.52px;font-size:8.55px;font-weight:400;color:#1a1a1a;-webkit-text-stroke:0.25px #1a1a1a;letter-spacing:0px">Игнатьев А.В.</div>
<div class="t" style="left:314.5px;top:475.52px;font-size:8.55px;font-weight:400;color:#1a1a1a;-webkit-text-stroke:0.25px #1a1a1a;letter-spacing:0px">Сулимова О.</div>
<div class="t" style="left:653.8px;top:475.52px;font-size:8.55px;font-weight:400;color:#1c44c4;-webkit-text-stroke:0.25px #1c44c4;letter-spacing:0px">Строительство ЦЦСР</div>
<div class="t" style="left:745.9px;top:475.52px;font-size:8.55px;font-weight:400;color:#1a1a1a;-webkit-text-stroke:0.25px #1a1a1a;letter-spacing:0.18px">Проектная документация</div>
<div class="t" style="left:919.5px;top:475.52px;font-size:8.55px;font-weight:400;color:#1a1a1a;-webkit-text-stroke:0.25px #1a1a1a;letter-spacing:0px">2</div>
<div class="a" style="left:63.7px;top:499.5px;width:1048.5px;height:7.6px;background:#f9f9f9;border-top:1px solid #e8e8e8;border-bottom:1px solid #ececec"></div>
<div class="a" style="left:65.6px;top:501.8px;width:830px;height:4px;border-radius:2px;background:#b9b9bb"></div>
<div class="a" style="left:0;top:567.6px;width:1129.5px;height:26.6px;background:#061046;border-radius:0 0 4px 4px"></div>
<div class="t" style="left:430.8px;top:577.06px;font-size:8.77px;font-weight:400;color:#fff;-webkit-text-stroke:0.2px #fff">© Цифровое управление строительством</div>
<div class="t" style="left:602.8px;top:577.04px;font-size:8.8px;font-weight:400;color:#fff;-webkit-text-stroke:0.3px #fff">|</div>
<div class="t" style="left:608px;top:577.04px;font-size:8.8px;font-weight:700;color:#fff;transform:scaleX(0.925);transform-origin:0 0">Сообщить о проблеме</div></body></html>
